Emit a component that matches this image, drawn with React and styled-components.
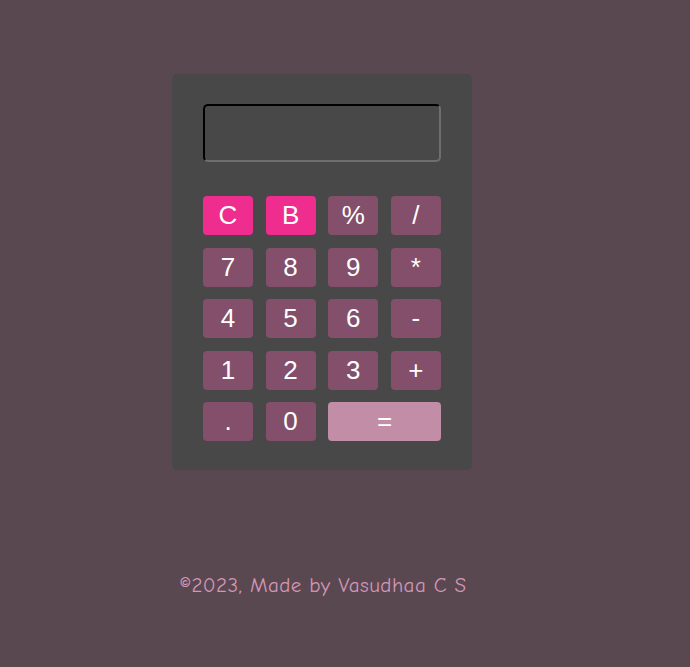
import styled, { createGlobalStyle } from "styled-components";

const GlobalStyle = createGlobalStyle`
  html, body {
    margin: 0;
    padding: 0;
    background: #5a4851;
  }
  body {
    min-height: 667px;
    font-family: "Liberation Sans", Arial, sans-serif;
  }
`;

const Page = styled.div`
  width: 644px;
  display: flex;
  flex-direction: column;
  align-items: center;
  padding-top: 74px;
`;

const Body = styled.div`
  width: 300px;
  box-sizing: border-box;
  padding: 30px 31px 29px;
  background: #484848;
  border-radius: 5px;
`;

const Display = styled.div`
  height: 58px;
  box-sizing: border-box;
  border: 2px inset #6e6e6e;
  border-top-color: #222222;
  border-left-color: #222222;
  border-radius: 5px;
  margin-bottom: 34px;
`;

const Keys = styled.div`
  display: grid;
  grid-template-columns: repeat(4, 50px);
  grid-auto-rows: 39px;
  column-gap: 12.6px;
  row-gap: 12.5px;
`;

const Key = styled.button`
  border: none;
  border-radius: 4px;
  padding: 0;
  color: #ffffff;
  font-family: "Liberation Sans", Arial, sans-serif;
  font-size: 26px;
  line-height: 39px;
  background: ${(p) =>
    p.$kind === "clear" ? "#ee2d8f" : p.$kind === "equal" ? "#c28ea7" : "#834f6a"};
  grid-column: ${(p) => (p.$wide ? "span 2" : "auto")};
  cursor: pointer;
`;

const Footer = styled.p`
  margin: 103px 0 0 2px;
  font-family: "Comic Sans MS", "Comic Neue", "DejaVu Sans", sans-serif;
  font-size: 21px;
  letter-spacing: 0.45px;
  color: #d496b7;
`;

const keys = [
  ["C", "clear"],
  ["B", "clear"],
  ["%"],
  ["/"],
  ["7"],
  ["8"],
  ["9"],
  ["*"],
  ["4"],
  ["5"],
  ["6"],
  ["-"],
  ["1"],
  ["2"],
  ["3"],
  ["+"],
  ["."],
  ["0"],
  ["=", "equal", true],
];

const App = () => {
  return (
    <>
      <GlobalStyle />
      <Page>
        <Body>
          <Display />
          <Keys>
            {keys.map(([label, kind, wide]) => (
              <Key key={label} $kind={kind} $wide={wide}>
                {label}
              </Key>
            ))}
          </Keys>
        </Body>
        <Footer>©2023, Made by Vasudhaa C S</Footer>
      </Page>
    </>
  );
};

export default App;
